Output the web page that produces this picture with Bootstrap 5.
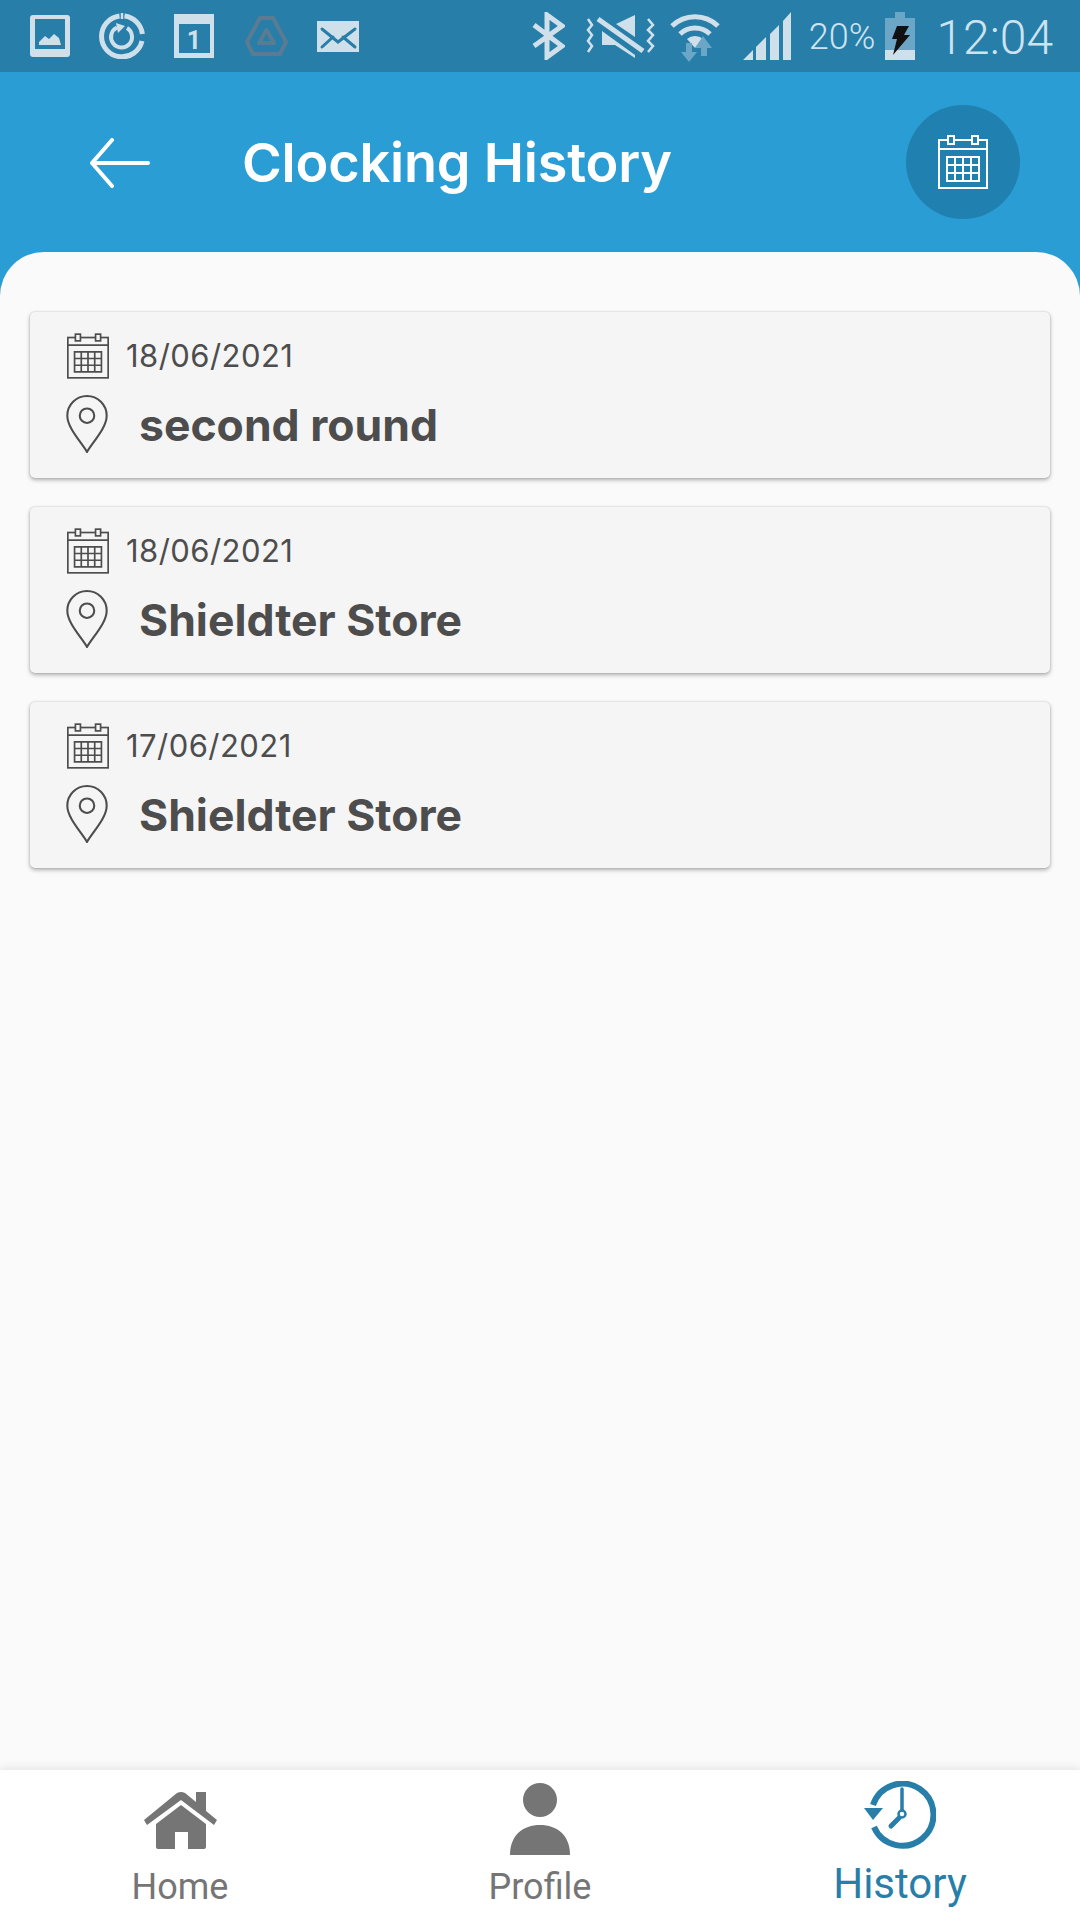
<!DOCTYPE html>
<html lang="en">
<head>
  <meta charset="UTF-8" />
  <title>Clocking History</title>
  <link href="https://cdn.jsdelivr.net/npm/bootstrap@5.3.0/dist/css/bootstrap.min.css" rel="stylesheet" />
  <style>
    html, body { width: 1080px; height: 1920px; overflow: hidden; }
    body { background: #2b9dd5; font-family: Inter, "Liberation Sans", sans-serif; color: #4d4d4d; }
    .app-shell { height: 1920px; }

    .status-row { height: 72px; background: #277ea9; padding: 0 27px 0 30px; color: #cfe0ea; flex: none; }
    .status-row svg { display: block; flex: none; fill: currentColor; }
    .status-left { gap: 29px; }
    .status-pct { font: 300 36px/1 Roboto, sans-serif; color: #cde4f0; margin-left: 17px; margin-right: 10px; padding-top: 2px; }
    .status-time { font: 300 48px/1 Roboto, sans-serif; color: #cde4f0; margin-left: 21px; padding-top: 3px; }
    .ic-cal1 { margin-right: 2px; }
    .ic-mute { margin-left: 20px; }
    .ic-wifi { margin-left: 15px; }
    .ic-signal { margin-left: 23px; }

    .title-row { height: 180px; background: #2b9dd5; padding: 2px 60px 0 90px; flex: none; color: #fff; }
    .title-text { font-size: 54px; font-weight: 600; margin: 0 0 0 92px; line-height: 1; letter-spacing: -.2px; }
    .cal-btn { width: 114px; height: 114px; border-radius: 50%; background: #2081b0; border: 0; padding: 0; color: #fff; margin-bottom: 3px; }

    .list-panel { background: #fafafa; border-radius: 44px 44px 0 0; padding: 60px 30px 0; gap: 29px; min-height: 0; }
    .visit-card { background: #f5f5f5; border-radius: 5px; height: 166px; padding: 21px 37px 0;
      box-shadow: 0 2px 4px rgba(0,0,0,.3), 0 0 2px rgba(0,0,0,.18); }
    .visit-date { font-size: 31px; line-height: 46px; margin-left: 17px; font-weight: 400; letter-spacing: .45px; }
    .visit-place { font-size: 44.500px; line-height: 58px; margin-left: 31px; font-weight: 700; padding-top: 2px; }
    .visit-pin { margin-top: 15px; margin-left: -1px; }

    .tab-row { height: 150px; background: #fff; flex: none; box-shadow: 0 -2px 8px rgba(0,0,0,.09); position: relative; }
    .tab-item { color: #757575; font: 400 36px/1 Roboto, sans-serif; }
    .tab-item svg { display: block; fill: currentColor; }
    .tab-icon { height: 97px; }
    .tab-home svg { margin-top: 4px; }
    .tab-label { line-height: 40px; }
    .tab-on { color: #277ea9; font-size: 42px; }
    .tab-on .tab-icon { height: 94px; padding-bottom: 4px; }
  </style>
</head>
<body>
<svg width="0" height="0" class="d-block position-absolute">
  <symbol id="calIcon" viewBox="0 0 50 54">
    <g fill="none" stroke="currentColor" stroke-width="2">
      <rect x="1" y="5" width="48" height="48"/>
      <path d="M1 14H49"/>
      <rect x="10" y="1" width="6" height="8" fill="var(--cal-bg)"/>
      <rect x="34" y="1" width="6" height="8" fill="var(--cal-bg)"/>
      <path d="M9 22H41V46H9ZM9 30H41M9 38H41M17 22V46M25 22V46M33 22V46"/>
    </g>
  </symbol>
  <symbol id="pinIcon" viewBox="1 1 40 56">
    <g fill="none" stroke="currentColor" stroke-width="2">
      <path d="M21 56C16 47 2 33 2 21A19 19 0 0 1 40 21C40 33 26 47 21 56Z"/>
      <circle cx="21" cy="21" r="7"/>
    </g>
  </symbol>
</svg>

<div class="app-shell d-flex flex-column">
  <div class="status-row d-flex align-items-center">
    <div class="status-left d-flex align-items-center">
      <svg width="40" height="42" viewBox="0 0 40 42"><path fill-rule="evenodd" d="M3 0H37a3 3 0 0 1 3 3V39a3 3 0 0 1-3 3H3a3 3 0 0 1-3-3V3a3 3 0 0 1 3-3ZM5 4V34H35V4Z"/><path d="M9 30V27L15 21 19 24 24 19 29 23 31 30Z"/></svg>
      <svg width="46" height="46" viewBox="0 0 46 46"><g fill="none" stroke="currentColor"><path stroke-width="5" d="M25.500 3A20.500 20.500 0 0 1 43.400 21M43 28A20.500 20.500 0 1 1 20.500 3"/><path stroke-width="2.500" d="M23 0V6"/><path stroke-width="4" d="M28 15A10.500 10.500 0 1 1 18 14.500"/></g><path d="M17 10 26 13 19 20Z"/></svg>
      <svg class="ic-cal1" width="40" height="44" viewBox="0 0 40 44"><path fill-rule="evenodd" d="M0 0H40V44H0ZM5 10V39H36V10Z"/><text x="20" y="35" text-anchor="middle" font-family="Roboto, sans-serif" font-weight="700" font-size="25">1</text></svg>
      <svg width="43" height="40" viewBox="0 0 43 40"><g fill="none" stroke="#5b7b92" stroke-width="4" stroke-linejoin="round"><path d="M15 2H28L41 26 35 38H8L2 26Z"/><path d="M21.500 14 29 27H14Z"/></g></svg>
      <svg width="42" height="31" viewBox="0 0 42 31"><rect width="42" height="31"/><path fill="none" stroke="#277ea9" stroke-width="3" stroke-linecap="round" d="M5 8 21 21 38 8M5 26 16 16M38 26 26 16"/></svg>
    </div>
    <div class="ms-auto d-flex align-items-center">
      <svg width="33" height="48" viewBox="0 0 33 48"><path fill="none" stroke="currentColor" stroke-width="5" d="M2 34 30 14 15 3V45L30 34 2 13"/></svg>
      <svg class="ic-mute" width="70" height="45" viewBox="0 0 70 45"><path fill="none" stroke="currentColor" stroke-width="2.500" d="M3 5 7 11 3 16 7 21 3 27 7 32 3 38M63 5 68 11 63 16 68 21 63 27 68 32 63 38"/><path d="M50 1V23L31 10ZM17 17 50 41V44L30 31H17Z"/><path fill="none" stroke="currentColor" stroke-width="5" d="M13 5 58 37"/></svg>
      <svg class="ic-wifi" width="50" height="52" viewBox="0 0 50 52"><g fill="none" stroke="currentColor" stroke-width="5"><path d="M2 16A33 33 0 0 1 48 16"/><path d="M10 24A22 22 0 0 1 40 24"/></g><path d="M17 29A12 12 0 0 1 33 29L25 38Z"/><path fill="#6ba6c6" d="M22 33V42H27L19 52 11 42H16V33ZM33 26 42 38H37V46H31V38H25Z"/></svg>
      <svg class="ic-signal" width="49" height="48" viewBox="0 0 49 48"><path d="M0 48 10 38V48ZM13 48V35L23 25V48ZM27 48V22L36 13V48ZM40 48V9L48 0V48Z"/></svg>
      <span class="status-pct">20%</span>
      <svg width="30" height="48" viewBox="0 0 30 48"><path fill="#6ba6c6" d="M10 0H20V6H30V38H0V6H10Z"/><rect y="38" width="30" height="10"/><path fill="#111" d="M12 14H24L19 23H25L8 43 12 27H7Z"/></svg>
      <span class="status-time">12:04</span>
    </div>
  </div>

  <div class="title-row d-flex align-items-center">
    <svg width="60" height="50" viewBox="0 0 60 50" fill="none" stroke="currentColor" stroke-width="4" stroke-linecap="round" stroke-linejoin="round"><path d="M58 25H2M22 2 2 25 22 48"/></svg>
    <h1 class="title-text">Clocking History</h1>
    <button type="button" class="cal-btn ms-auto d-flex align-items-center justify-content-center" aria-label="Pick date">
      <svg width="50" height="54" style="--cal-bg:#2081b0"><use href="#calIcon"/></svg>
    </button>
  </div>

  <div class="list-panel flex-grow-1 d-flex flex-column" id="visitList"></div>

  <div class="tab-row row g-0">
    <div class="col-4 tab-item text-center">
      <div class="tab-icon tab-home d-flex align-items-center justify-content-center">
        <svg width="73" height="58" viewBox="0 0 73 58"><path d="M0 28 33 1Q37-1 41 1L52 10V0H62V19L73 28 70 33 37 8 3 33Z"/><path d="M37 13 12 32V55Q12 57 14 57H31V40H44V57H60Q62 57 62 55V32Z"/></svg>
      </div>
      <div class="tab-label">Home</div>
    </div>
    <div class="col-4 tab-item text-center">
      <div class="tab-icon d-flex align-items-center justify-content-center">
        <svg width="60" height="72" viewBox="0 0 60 72"><circle cx="30" cy="17" r="17"/><path d="M0 72C0 52 13 42 30 42S60 52 60 72Z"/></svg>
      </div>
      <div class="tab-label">Profile</div>
    </div>
    <div class="col-4 tab-item tab-on text-center">
      <div class="tab-icon d-flex align-items-center justify-content-center">
        <svg width="72" height="68" viewBox="0 0 72 68"><g fill="none" stroke="currentColor"><path stroke-width="6" d="M10 46A31 31 0 1 0 9 24"/><path stroke-width="3.500" stroke-linecap="round" d="M38 8V29"/><circle stroke-width="2.500" cx="38" cy="33" r="3.500"/><path stroke-width="5" stroke-linecap="round" d="M35 37 27 45"/></g><path d="M0 27H19L9 39Z"/></svg>
      </div>
      <div class="tab-label">History</div>
    </div>
  </div>
</div>

<script src="https://cdn.jsdelivr.net/npm/bootstrap@5.3.0/dist/js/bootstrap.bundle.min.js"></script>
<script>
const visits = [
  { date: "18/06/2021", place: "second round" },
  { date: "18/06/2021", place: "Shieldter Store" },
  { date: "17/06/2021", place: "Shieldter Store" }
];

document.getElementById("visitList").innerHTML = visits.map(v => `
  <div class="visit-card">
    <div class="d-flex align-items-center">
      <svg width="42" height="46" style="--cal-bg:#f5f5f5"><use href="#calIcon"/></svg>
      <span class="visit-date">${v.date}</span>
    </div>
    <div class="d-flex align-items-center visit-pin">
      <svg width="42" height="58"><use href="#pinIcon"/></svg>
      <span class="visit-place">${v.place}</span>
    </div>
  </div>
`).join("");
</script>
</body>
</html>
